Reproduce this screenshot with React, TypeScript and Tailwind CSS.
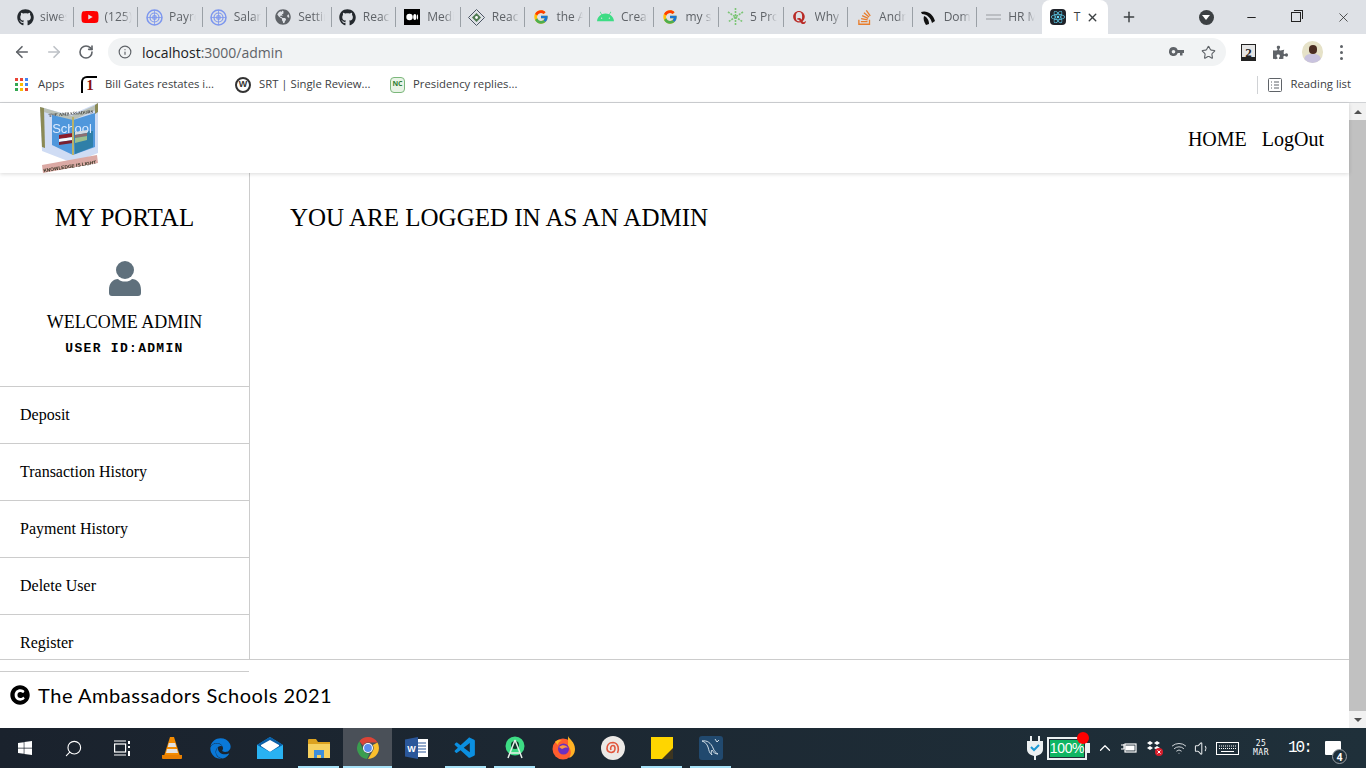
import type { ReactNode } from "react";
import { ArrowLeft, ArrowRight, RotateCw, Info, Star, Plus, X, Minus, Search, ChevronUp, Volume1, Wifi } from "lucide-react";
import { FaGithub, FaYoutube, FaGlobeAmericas, FaAndroid, FaQuora, FaStackOverflow, FaReact, FaWindows, FaEdge, FaPuzzlePiece, FaCopyright } from "react-icons/fa";
import { FcGoogle } from "react-icons/fc";
import { VscVscode } from "react-icons/vsc";

const Medium = () => (
  <svg width="16" height="16" viewBox="0 0 16 16">
    <rect width="16" height="16" fill="#000" />
    <circle cx="5.5" cy="8" r="3.2" fill="#fff" />
    <ellipse cx="10.8" cy="8" rx="1.6" ry="3" fill="#fff" />
    <ellipse cx="13.5" cy="8" rx="0.6" ry="2.7" fill="#fff" />
  </svg>
);

const Rings = () => (
  <svg width="17" height="17" viewBox="0 0 17 17" fill="none" stroke="#7d97ee">
    <circle cx="8.5" cy="8.5" r="7.5" strokeWidth="1.5" />
    <circle cx="8.5" cy="8.5" r="4.5" strokeWidth="1.2" />
    <circle cx="8.5" cy="8.5" r="1.8" strokeWidth="1.2" />
    <path d="M1 8.5h15M8.5 1v15" strokeWidth="0.8" />
  </svg>
);

const Diamond = () => (
  <svg width="17" height="17" viewBox="0 0 17 17">
    <path d="M8.5 .5l8 8-8 8-8-8z" fill="none" stroke="#4b5563" />
    <path d="M8.5 4l4.5 4.5-4.5 4.5L4 8.5z" fill="#4f7a52" />
    <circle cx="8.5" cy="8.5" r="1.4" fill="#fff" />
  </svg>
);

const Snow = () => (
  <svg width="17" height="18" viewBox="0 0 17 18" fill="none" stroke="#7cc576" strokeWidth="1.6" strokeDasharray="2 1">
    <path d="M8.5 0v18M1 4l15 10M16 4L1 14" />
  </svg>
);

const Dom = () => (
  <svg width="17" height="17" viewBox="0 0 17 17" fill="#111">
    <path d="M1 3c6-2 12 2 14 9l-3 2C11 9 7 5 2 5z" />
    <path d="M4 7c3 1 5 4 5 8l-3 1C4 13 3 10 4 7z" />
  </svg>
);

const Lines = () => (
  <svg width="15" height="8" viewBox="0 0 15 8" stroke="#b0b3b8" strokeWidth="1.5">
    <path d="M0 2h15M0 6h15" />
  </svg>
);

const tabs: { icon: ReactNode; text: string }[] = [
  { icon: <FaGithub size={17} color="#24292e" />, text: "siwes" },
  { icon: <FaYoutube size={18} color="#f00" />, text: "(125) " },
  { icon: <Rings />, text: "Payroll" },
  { icon: <Rings />, text: "Salary" },
  { icon: <FaGlobeAmericas size={16} color="#5f6368" />, text: "Settings" },
  { icon: <FaGithub size={17} color="#24292e" />, text: "React" },
  { icon: <Medium />, text: "Medium" },
  { icon: <Diamond />, text: "React" },
  { icon: <FcGoogle size={16} />, text: "the A" },
  { icon: <FaAndroid size={17} color="#3ddc84" />, text: "Create" },
  { icon: <FcGoogle size={16} />, text: "my s" },
  { icon: <Snow />, text: "5 Pro" },
  { icon: <FaQuora size={15} color="#b92b27" />, text: "Why" },
  { icon: <FaStackOverflow size={17} color="#e87d2b" />, text: "Andr" },
  { icon: <Dom />, text: "Dom" },
  { icon: <Lines />, text: "HR M" },
];

const ReactTile = () => (
  <span className="flex h-4 w-4 items-center justify-center rounded-sm bg-[#20232a]">
    <FaReact size={14} color="#61dafb" />
  </span>
);

const Logo = () => (
  <svg width="60" height="70" viewBox="0 0 60 70" className="blur-[0.4px]">
    <path d="M0 4l30 8L58 0v50L33 60 2 48z" fill="#cfdcf4" />
    <path d="M0 4l4 1 1 40-3-1z" fill="#8b8a55" />
    <path d="M4 5l27 8L58 1v5L31 18 4 9z" fill="#b9c0b8" />
    <path d="M55 2l3-2v9l-3 2z" fill="#8b8a55" />
    <text x="31" y="12" fontSize="4.5" fontWeight="700" textAnchor="middle" fill="#3b3b3b" transform="rotate(-5 31 12)" fontFamily="Liberation Serif, serif">THE AMBASSADORS</text>
    <path d="M12 12l21 5 22-7v34L33 52 12 42z" fill="#4f97dc" />
    <path d="M34 29l19-1v16L35 51z" fill="#2f7fa8" />
    <text x="32" y="30" fontSize="13" textAnchor="middle" fill="#dbeafe" fontFamily="Liberation Sans, sans-serif">School</text>
    <path d="M19 32l14-2v4l-14 2z" fill="#8c1c2a" />
    <path d="M19 36l14-2v3l-14 2z" fill="#f8fafc" />
    <path d="M19 39l14-2v3l-14 2z" fill="#7a2030" />
    <path d="M35 29l12-2v3l-12 2z" fill="#d4dbe3" />
    <path d="M35 32l12-2v3l-12 2z" fill="#8c6f70" />
    <path d="M35 35l12-2v4l-12 3z" fill="#9bbf8f" />
    <path d="M32 14h2v38h-2z" fill="#b8b26a" />
    <path d="M2 62l55-10 1 8-55 10z" fill="#dba9a4" />
    <text x="30" y="65" fontSize="4.800" fontWeight="700" textAnchor="middle" fill="#332" transform="rotate(-9 30 65)" fontFamily="Liberation Sans, sans-serif">KNOWLEDGE IS LIGHT</text>
  </svg>
);

const Chrome = () => (
  <svg width="24" height="24" viewBox="0 0 24 24">
    <path d="M12 1a11 11 0 0 1 9.500 5.500H12A5.500 5.500 0 0 0 7 9.600L3.400 5.200A11 11 0 0 1 12 1z" fill="#db4437" />
    <path d="M21.500 6.500A11 11 0 0 1 12 23l4.700-8.100A5.500 5.500 0 0 0 16.800 9z" fill="#fbc02d" />
    <path d="M3.400 5.200L7.500 14.500A5.500 5.500 0 0 0 13.500 17.300L11 23A11 11 0 0 1 3.400 5.200z" fill="#3a9d4f" />
    <circle cx="12" cy="12" r="5" fill="#fff" />
    <circle cx="12" cy="12" r="3.900" fill="#5b8def" />
  </svg>
);

// inset: 40px wide underline of a running app, full: the focused one
const taskbar: { icon: ReactNode; line?: "inset" | "full"; active?: boolean }[] = [
  { icon: <FaWindows size={16} color="#fff" /> },
  { icon: <Search size={19} color="#fff" className="-scale-x-100" strokeWidth={1.4} /> },
  {
    icon: (
      <svg width="17" height="17" viewBox="0 0 17 17" fill="none" stroke="#fff" strokeWidth="1.2">
        <path d="M0 1h12M0 15h12" />
        <rect x=".6" y="4" width="11" height="8" />
        <path d="M15 1v3M15 6v2M15 11v5" strokeWidth="2" />
      </svg>
    ),
  },
  {
    icon: (
      <svg width="20" height="24" viewBox="0 0 20 24">
        <path d="M8 1h4l6 19H2z" fill="#f48b00" />
        <path d="M6.800 7h6.400l1 4H5.800zM5 13h10l1 4H4z" fill="#e2e2e2" />
        <path d="M0 19h20v3a1 1 0 0 1-1 1H1a1 1 0 0 1-1-1z" fill="#e97f00" />
      </svg>
    ),
  },
  { icon: <FaEdge size={21} color="#0a78d7" /> },
  {
    icon: (
      <svg width="26" height="22" viewBox="0 0 26 22">
        <path d="M0 8L13 0l13 8v14H0z" fill="#1aa0e8" />
        <path d="M0 8l13 8 13-8-13-8z" fill="#0a5fa8" />
        <path d="M4 9l9 6 9-6v-1l-9-5-9 5z" fill="#fff" />
        <path d="M0 8l13 7 13-7v14H0z" fill="#29b2f2" />
      </svg>
    ),
  },
  {
    icon: (
      <svg width="22" height="19" viewBox="0 0 22 19">
        <path d="M0 1a1 1 0 0 1 1-1h7l2 3h12v16H0z" fill="#dca21f" />
        <path d="M0 5h22v14H0z" fill="#f6d160" />
        <path d="M6 11h10v8h-3v-3H9v3H6z" fill="#3d8fdc" />
      </svg>
    ),
    line: "inset",
  },
  { icon: <Chrome />, line: "full", active: true },
  {
    icon: (
      <svg width="23" height="22" viewBox="0 0 23 22">
        <path d="M9 2h14v18H9z" fill="#fff" />
        <path d="M12 6h9M12 9h9M12 12h9M12 15h9" stroke="#2b579a" strokeWidth="1.200" />
        <path d="M0 2.500L13 0v22L0 19.500z" fill="#2b579a" />
        <text x="6.500" y="14.500" fontSize="9" fontWeight="700" textAnchor="middle" fill="#fff" fontFamily="Liberation Sans, sans-serif">W</text>
      </svg>
    ),
  },
  { icon: <VscVscode size={25} color="#0b8fe0" />, line: "inset" },
  {
    icon: (
      <svg width="20" height="24" viewBox="0 0 20 24">
        <circle cx="10" cy="10" r="9.500" fill="#3ddc84" />
        <circle cx="10" cy="9" r="4" fill="#12372a" />
        <path d="M10 4L3 22M10 4l7 18M5 17h10" stroke="#e6efe9" strokeWidth="1.500" fill="none" />
      </svg>
    ),
    line: "inset",
  },
  {
    icon: (
      <svg width="23" height="24" viewBox="0 0 23 24">
        <circle cx="11" cy="13" r="10.500" fill="#ff5d2e" />
        <path d="M16 0c1 3 7 6 7 13 0 5-3 8-6 9 3-4 2-9-1-12z" fill="#ffb224" />
        <path d="M3 6c3-3 5-2 7-1-3 0-4 2-4 4z" fill="#ffb224" />
        <circle cx="11.500" cy="13" r="5.500" fill="#6b2fbf" />
        <path d="M7 11c3-3 8-2 9 1-2-1-4 0-6 1z" fill="#ff9a3d" />
      </svg>
    ),
  },
  {
    icon: (
      <span className="flex h-6 w-6 items-center justify-center rounded-full bg-[#ece9e6]">
        <svg width="14" height="14" viewBox="0 0 14 14" fill="none" stroke="#e2583e" strokeWidth="1.600">
          <path d="M11.500 12C13 9 13 2 7 1.500 2.500 1.500 1 5 1 7.500 1 11 5 12.500 8 10.500 9.500 9 9.500 4.500 7 4.500 5 4.500 4 7 5 9" />
        </svg>
      </span>
    ),
  },
  {
    icon: (
      <svg width="22" height="22" viewBox="0 0 22 22">
        <path d="M0 0h22v22H0z" fill="#ffd500" />
        <path d="M11 22l11-11v11z" fill="#3d3520" />
      </svg>
    ),
    line: "inset",
  },
  {
    icon: (
      <span className="flex h-6 w-6 items-center justify-center rounded-[3px] bg-[#21496e]">
        <svg width="20" height="20" viewBox="0 0 20 20" fill="none" stroke="#cfdce6" strokeWidth="1">
          <path d="M1 3c5-1 9 2 11 7 1 3 3 5 5 6-3 0-5-2-6-4-1 1-1 3 0 5-3-2-3-5-4-8C6 6 4 4 1 3z" />
          <path d="M14 1l2 3 2-2" />
        </svg>
      </span>
    ),
    line: "inset",
  },
];

const sideItems = ["Deposit", "Transaction History", "Payment History", "Delete User", "Register"];

function ChromeBar() {
  return (
    <div className="shrink-0 font-['Open_Sans',sans-serif]">
      {/* tab strip */}
      <div className="flex h-[34px] items-center bg-[#dee1e6] pl-[9px]">
        {tabs.map((t, i) => (
          <div key={i} className={`flex h-5 w-[64.55px] items-center pl-[7px] ${i < tabs.length - 1 ? "border-r border-[#9aa0a6]" : ""}`}>
            <span className="flex w-[18px] shrink-0 justify-center">{t.icon}</span>
            <span className="ml-[6px] w-[27px] overflow-hidden whitespace-nowrap text-[12px] text-[#5f6368] [mask-image:linear-gradient(to_right,black_65%,transparent)]">
              {t.text}
            </span>
          </div>
        ))}
        <div className="flex h-[34px] w-[66px] items-center rounded-t-lg bg-white pl-2">
          <ReactTile />
          <span className="ml-2 text-[12px] text-[#3c4043]">T</span>
          <X size={13} strokeWidth={2.6} className="ml-[6px] text-[#3c4043]" />
        </div>
        <Plus size={16} strokeWidth={2.2} className="ml-[13px] text-[#3c4043]" />
        <span className="ml-[62px] flex h-[15px] w-[15px] items-center justify-center rounded-full bg-[#3c4043]">
          <span className="h-0 w-0 border-x-[4px] border-t-[5px] border-x-transparent border-t-white" />
        </span>
        <Minus size={13} className="ml-[31px] text-[#222]" />
        <span className="relative ml-[33px] h-[10px] w-[10px] border border-[#222] bg-[#dee1e6] before:absolute before:-right-[3px] before:-top-[3px] before:h-[9px] before:w-[9px] before:border-r before:border-t before:border-[#222]" />
        <X size={15} strokeWidth={1.2} className="ml-[35px] text-[#222]" />
      </div>

      {/* address bar */}
      <div className="flex h-9 items-center bg-white">
        <ArrowLeft size={18} strokeWidth={2.2} className="ml-[13px] text-[#5f6368]" />
        <ArrowRight size={18} strokeWidth={2.2} className="ml-[14px] text-[#bdc1c6]" />
        <RotateCw size={16} strokeWidth={2.4} className="ml-[15px] text-[#5f6368]" />
        <div className="ml-[14px] flex h-7 w-[1118px] items-center rounded-full bg-[#f1f3f4]">
          <Info size={14} strokeWidth={2} className="ml-[10px] text-[#5f6368]" />
          <span className="ml-[10px] text-[14px] text-[#5f6368]">
            <span className="text-[#202124]">localhost</span>:3000/admin
          </span>
          <svg width="15" height="10" viewBox="0 0 15 10" fill="#5f6368" className="ml-auto">
            <path d="M4.500 0a4.500 4.500 0 0 1 4.200 3H15v3h-1.500v2.500h-2.500V6H8.700A4.500 4.500 0 1 1 4.500 0zm0 3a1.800 1.800 0 1 0 0 3.600 1.800 1.800 0 0 0 0-3.600z" />
          </svg>
          <Star size={15} strokeWidth={1.8} className="ml-[17px] mr-[10px] text-[#5f6368]" />
        </div>
        <span className="ml-[15px] flex h-[17px] w-[15px] items-center justify-center border border-[#222] bg-[#e5e5e5] font-['Liberation_Serif',serif] text-[13px] font-bold leading-none text-[#222] shadow-[inset_0_-3px_0_#222]">2</span>
        <FaPuzzlePiece size={15} color="#5f6368" className="ml-[17px]" />
        <span className="ml-[14px] flex h-[22px] w-[21px] flex-col items-center overflow-hidden rounded-full bg-[#e6e2c8]">
          <span className="mt-[4px] h-[9px] w-[8px] rounded-full bg-[#4a2c21]" />
          <span className="h-[9px] w-[17px] rounded-t-md bg-[#c9c3de]" />
        </span>
        <span className="ml-[17px] flex flex-col gap-[3px]">
          <span className="h-[3px] w-[3px] rounded-full bg-[#5f6368]" />
          <span className="h-[3px] w-[3px] rounded-full bg-[#5f6368]" />
          <span className="h-[3px] w-[3px] rounded-full bg-[#5f6368]" />
        </span>
      </div>

      {/* bookmarks */}
      <div className="flex h-[33px] items-center border-b border-[#d0d2d5] bg-white pb-[3px] text-[11.3px] text-[#3c4043]">
        <span className="ml-[15px] grid h-[13px] w-[13px] grid-cols-3 gap-[2px]">
          {["#ea4335", "#ea4335", "#4285f4", "#34a853", "#fbbc05", "#4285f4", "#34a853", "#fbbc05", "#ea4335"].map((c, i) => (
            <span key={i} className="h-[3px] w-[3px]" style={{ backgroundColor: c }} />
          ))}
        </span>
        <span className="ml-[10px] w-[43px]">Apps</span>
        <span className="flex h-[17px] w-[16px] items-center justify-center rounded-tl-md border-l-2 border-t-2 border-black font-['Liberation_Serif',serif] text-[15px] font-bold leading-none text-[#8a1010]">1</span>
        <span className="ml-[8px] w-[130px] whitespace-nowrap">Bill Gates restates i...</span>
        <span className="flex h-4 w-4 items-center justify-center rounded-full border-2 border-[#333] font-['Liberation_Sans',sans-serif] text-[9px] font-bold leading-none text-[#333]">W</span>
        <span className="ml-[8px] w-[131px] whitespace-nowrap">SRT | Single Review...</span>
        <span className="flex h-[16px] w-[15px] items-center justify-center rounded-sm border border-[#7bb77b] bg-[#e8f3e6] text-[7px] font-bold text-[#2e7d32]">NC</span>
        <span className="ml-[8px] whitespace-nowrap">Presidency replies...</span>
        <span className="ml-auto h-[18px] border-l border-[#d0d2d5]" />
        <svg width="14" height="14" viewBox="0 0 14 14" fill="none" stroke="#5f6368" className="ml-[10px]">
          <rect x=".5" y=".5" width="13" height="13" rx="1" />
          <path d="M3 4h1M6 4h5M3 7h1M6 7h5M3 10h1M6 10h5" />
        </svg>
        <span className="ml-[9px] mr-[15px] whitespace-nowrap">Reading list</span>
      </div>
    </div>
  );
}

function Scrollbar() {
  return (
    <div className="flex w-[17px] shrink-0 flex-col bg-[#f1f1f1]">
      <div className="flex h-[17px] items-center justify-center">
        <span className="h-0 w-0 border-x-[4px] border-b-[4px] border-x-transparent border-b-[#505050]" />
      </div>
      <div className="flex-1 bg-[#c1c1c1]" />
      <div className="flex h-[17px] items-center justify-center">
        <span className="h-0 w-0 border-x-[4px] border-t-[4px] border-x-transparent border-t-[#505050]" />
      </div>
    </div>
  );
}

function Page() {
  return (
    <div className="flex min-w-0 flex-1 flex-col font-['Liberation_Serif',serif] text-black">
      <nav className="relative z-10 flex h-[70px] shrink-0 items-center bg-white shadow-[0_1px_4px_rgba(0,0,0,0.15)]">
        <div className="ml-[40px]"><Logo /></div>
        <div className="ml-auto mr-[25px] mt-[1px] flex gap-[15px] text-[20px]">
          <span>HOME</span>
          <span>LogOut</span>
        </div>
      </nav>

      <div className="flex h-[486px] shrink-0 overflow-hidden">
        <aside className="w-[250px] shrink-0 border-r border-[#ccc]">
          <div className="flex h-[213px] flex-col items-center">
            <h2 className="mt-[31px] text-[25px] leading-7">MY PORTAL</h2>
            <svg width="32" height="36" viewBox="0 0 32 36" className="mt-[29px]" fill="#5f707c">
              <circle cx="16" cy="9" r="9" />
              <path d="M0 29c0-7 4-11 9-11 2 2 4 2.500 7 2.500s5-.5 7-2.500c5 0 9 4 9 11v3a3 3 0 0 1-3 3H3a3 3 0 0 1-3-3z" />
            </svg>
            <p className="mt-[15px] text-[18px] leading-[21px]">WELCOME ADMIN</p>
            <p className="mt-[6px] font-['Liberation_Mono',monospace] text-[13px] font-bold tracking-[1.3px]">USER ID:ADMIN</p>
          </div>
          {sideItems.map((item) => (
            <div key={item} className="flex h-[57px] shrink-0 items-center border-t border-[#ccc] pl-5 text-[16px]">
              {item}
            </div>
          ))}
        </aside>
        <main className="flex-1 pl-10 pt-[31px]">
          <h1 className="text-[25px] leading-7">YOU ARE LOGGED IN AS AN ADMIN</h1>
        </main>
      </div>

      <footer className="flex-1 border-t border-[#ccc] bg-white">
        <div className="mt-[11px] w-[249px] border-t border-[#ccc]" />
        <div className="mt-[11px] flex items-center pl-[10px]">
          <FaCopyright size={20} color="#000" />
          <span className="ml-2 font-['Lato',sans-serif] text-[20px] leading-6 tracking-[0.55px]">The Ambassadors Schools 2021</span>
        </div>
      </footer>
    </div>
  );
}

function Taskbar() {
  return (
    <div className="flex h-10 shrink-0 items-center bg-gradient-to-r from-[#1a222d] to-[#1f303a] text-white">
      {taskbar.map((t, i) => (
        <div key={i} className={`relative flex h-10 w-[49px] shrink-0 items-center justify-center ${t.active ? "bg-[#4a5058]" : ""}`}>
          {t.icon}
          {t.line && <span className={`absolute bottom-0 h-[2px] bg-[#a6e1f7] ${t.line === "full" ? "inset-x-0" : "inset-x-[4px]"}`} />}
        </div>
      ))}
      <div className="ml-auto flex h-10 items-center">
        <svg width="16" height="24" viewBox="0 0 16 24" fill="#ecf0f1">
          <path d="M3 0h2v5h6V0h2v5h3v8c0 4-3 6-7 7v4H7v-4c-4-1-7-3-7-7V5h3z" />
          <path d="M4 11l3 3 5-5" stroke="#1b9ad6" strokeWidth="2" fill="none" />
        </svg>
        <div className="relative ml-[4px] flex h-[23px] w-[40px] items-center border-2 border-[#ecf0f1] p-[1px]">
          <span className="flex h-full w-full items-center justify-center bg-[#0fb562] font-['Liberation_Sans',sans-serif] text-[14px] leading-none tracking-tight text-white">100%</span>
          <span className="absolute -right-[4px] -top-[7px] h-3 w-3 rounded-full bg-[#f00]" />
        </div>
        <span className="h-[10px] w-[3px] bg-[#ecf0f1]" />
        <ChevronUp size={18} strokeWidth={1.6} className="ml-[6px]" />
        <svg width="16" height="12" viewBox="0 0 16 12" className="ml-[7px]" fill="none" stroke="#fff" strokeWidth="1.200">
          <rect x="4" y="2" width="11" height="8" />
          <path d="M5 4h8v4H5z" fill="#fff" />
          <path d="M0 3h3M0 7h3M3 2v5" />
        </svg>
        <svg width="17" height="15" viewBox="0 0 17 15" className="ml-[10px]">
          <path d="M0 2l3-2 3 2-3 2zM7 2l3-2 3 2-3 2zM0 7l3-2 3 2-3 2zM7 7l3-2 3 2-3 2z" fill="#fff" />
          <circle cx="12" cy="11" r="4" fill="#d81e2c" />
          <path d="M10.500 9.500l3 3M13.500 9.500l-3 3" stroke="#fff" />
        </svg>
        <Wifi size={16} strokeWidth={1.5} className="ml-[7px] text-[#cfd4d8]" />
        <Volume1 size={17} strokeWidth={1.5} className="ml-[7px] text-[#e3e6e8]" />
        <svg width="23" height="13" viewBox="0 0 23 13" fill="none" stroke="#fff" className="ml-[5px]">
          <rect x=".5" y=".5" width="22" height="12" />
          <path d="M3 4h17M3 6.500h17" strokeDasharray="1 1" />
          <path d="M5 9.500h13" />
        </svg>
        <div className="ml-[11px] w-[22px] text-center font-['DejaVu_Sans_Mono',monospace] text-[8px] leading-[9px] tracking-[0.5px]">
          25
          <br />
          MAR
        </div>
        <span className="ml-[16px] w-[26px] font-['Liberation_Mono',monospace] text-[16px] tracking-[-2px]">10:</span>
        <div className="relative ml-[11px] mr-[25px] h-[14px] w-4 rounded-[1px] bg-white">
          <span className="absolute -bottom-[9px] left-[7px] flex h-[15px] w-[15px] items-center justify-center rounded-full border border-[#9aa0a6] bg-[#1f303a] text-[10px] font-bold leading-none">4</span>
        </div>
      </div>
    </div>
  );
}

export default function App() {
  return (
    <div className="flex h-screen w-full flex-col overflow-hidden bg-white">
      <ChromeBar />
      <div className="flex min-h-0 flex-1">
        <Page />
        <Scrollbar />
      </div>
      <Taskbar />
    </div>
  );
}
